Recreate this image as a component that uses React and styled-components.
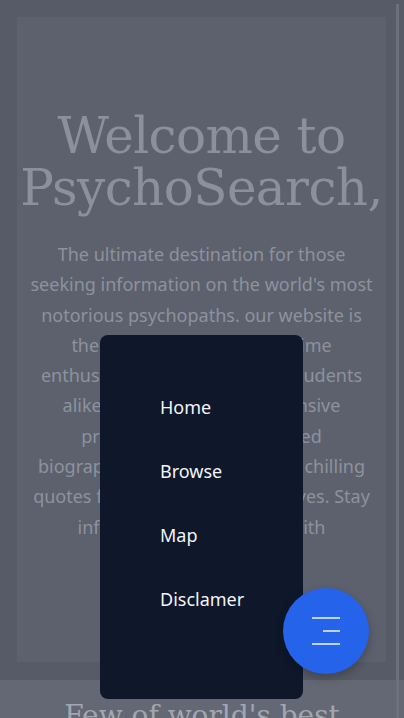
import React from 'react';
import styled, { createGlobalStyle } from 'styled-components';

const GlobalStyle = createGlobalStyle`
  html, body {
    margin: 0;
    padding: 0;
    height: 100%;
    overflow: hidden;
    background: #565b67;
  }
  * { box-sizing: border-box; }
`;

const links = ['Home', 'Browse', 'Map', 'Disclamer'];

const App = () => {
  return (
    <Page>
      <GlobalStyle />
      <Hero>
        <Title>Welcome to PsychoSearch,</Title>
        <Intro>
          The ultimate destination for those seeking information on the world's most
          notorious psychopaths. our website is the go-to source for true crime
          enthusiasts, researchers and students alike. We provide comprehensive
          profiles, including illustrated biographies, case histories and chilling
          quotes from the killers themselves. Stay informed and up to date with
        </Intro>
      </Hero>
      <Section>
        <SectionTitle>Few of world's best</SectionTitle>
      </Section>

      <Menu>
        {links.map((l) => (
          <MenuItem key={l}>{l}</MenuItem>
        ))}
      </Menu>

      <Fab aria-label="menu">
        <svg width="32" height="30" viewBox="0 0 32 30">
          <line x1="2" y1="2" x2="30" y2="2" stroke="#e8eefc" strokeWidth="1.6" />
          <line x1="13" y1="15" x2="30" y2="15" stroke="#e8eefc" strokeWidth="1.6" />
          <line x1="2" y1="28" x2="30" y2="28" stroke="#e8eefc" strokeWidth="1.6" />
        </svg>
      </Fab>

      <ScrollThumb />
    </Page>
  );
};

export default App;

const Page = styled.div`
  position: relative;
  width: 404px;
  height: 718px;
  overflow: hidden;
  background: #565b67;
  padding-top: 17px;
`;

const Hero = styled.section`
  margin: 0 18px 0 17px;
  height: 645px;
  background: #5c616d;
  display: flex;
  flex-direction: column;
  align-items: center;
  padding-top: 93px;
`;

const Title = styled.h1`
  margin: 0;
  width: 390px;
  text-align: center;
  font-family: "DejaVu Serif", "Liberation Serif", serif;
  font-weight: 400;
  font-size: 50px;
  line-height: 52px;
  color: #8a909d;
  letter-spacing: -0.6px;
`;

const Intro = styled.p`
  margin: 25px 0 0;
  width: 350px;
  text-align: center;
  font-family: "Noto Sans", "Open Sans", sans-serif;
  font-size: 18px;
  line-height: 30.3px;
  color: #8d929e;
`;

const Section = styled.section`
  margin-top: 18px;
  height: 60px;
  background: #636874;
  display: flex;
  justify-content: center;
  padding-top: 19px;
`;

const SectionTitle = styled.h2`
  margin: 0;
  font-family: "DejaVu Serif", "Liberation Serif", serif;
  font-weight: 400;
  font-size: 28px;
  color: #a2a6b0;
  white-space: nowrap;
`;

const Menu = styled.nav`
  position: absolute;
  left: 100px;
  top: 335px;
  width: 203px;
  height: 364px;
  background: #0f172a;
  border-radius: 8px;
  display: flex;
  flex-direction: column;
  gap: 40px;
  padding: 60px 0 0 60px;
`;

const MenuItem = styled.a`
  font-family: "Noto Sans", "Open Sans", sans-serif;
  font-size: 18px;
  line-height: 24px;
  color: #f3f4f6;
  cursor: pointer;
`;

const Fab = styled.button`
  position: absolute;
  left: 283px;
  top: 588px;
  width: 86px;
  height: 86px;
  border-radius: 50%;
  border: none;
  background: #2563eb;
  box-shadow: 0 4px 10px rgba(0, 0, 0, 0.25);
  display: flex;
  align-items: center;
  justify-content: center;
  padding: 0;
  cursor: pointer;
`;

const ScrollThumb = styled.div`
  position: absolute;
  left: 396px;
  top: 4px;
  bottom: 0;
  width: 3px;
  background: #6b707b;
`;
